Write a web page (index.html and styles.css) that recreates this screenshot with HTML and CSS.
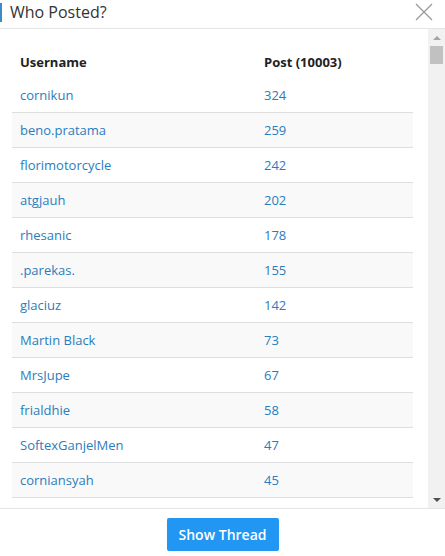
FILE: index.html
```html
<!DOCTYPE html>
<html>
<head>
<meta charset="utf-8">
<link rel="stylesheet" href="styles.css">
</head>
<body>
<div class="dialog">
  <div class="header">
    <h1 class="title">Who Posted?</h1>
    <button class="close" aria-label="Close">
      <svg width="18" height="18" viewBox="0 0 18 18"><path d="M1 1L17 17M17 1L1 17" stroke="#9a9a9a" stroke-width="1.2" fill="none"/></svg>
    </button>
  </div>
  <div class="body">
    <div class="content">
      <table class="posters">
        <thead>
          <tr><th class="c1">Username</th><th>Post (10003)</th></tr>
        </thead>
        <tbody>
          <tr><td><a href="#">cornikun</a></td><td><a href="#">324</a></td></tr>
          <tr><td><a href="#">beno.pratama</a></td><td><a href="#">259</a></td></tr>
          <tr><td><a href="#">florimotorcycle</a></td><td><a href="#">242</a></td></tr>
          <tr><td><a href="#">atgjauh</a></td><td><a href="#">202</a></td></tr>
          <tr><td><a href="#">rhesanic</a></td><td><a href="#">178</a></td></tr>
          <tr><td><a href="#">.parekas.</a></td><td><a href="#">155</a></td></tr>
          <tr><td><a href="#">glaciuz</a></td><td><a href="#">142</a></td></tr>
          <tr><td><a href="#">Martin Black</a></td><td><a href="#">73</a></td></tr>
          <tr><td><a href="#">MrsJupe</a></td><td><a href="#">67</a></td></tr>
          <tr><td><a href="#">frialdhie</a></td><td><a href="#">58</a></td></tr>
          <tr><td><a href="#">SoftexGanjelMen</a></td><td><a href="#">47</a></td></tr>
          <tr><td><a href="#">corniansyah</a></td><td><a href="#">45</a></td></tr>
        </tbody>
      </table>
    </div>
    <div class="scrollbar">
      <div class="arrow up"></div>
      <div class="track"><div class="thumb"></div></div>
      <div class="arrow down"></div>
    </div>
  </div>
  <div class="footer">
    <button class="btn">Show Thread</button>
  </div>
</div>
</body>
</html>
```
FILE: styles.css
```css
* { box-sizing: border-box; }
html, body { margin: 0; padding: 0; background: #fff; }
body { font-family: "Open Sans", "Noto Sans", sans-serif; color: #333; }
.dialog { width: 445px; height: 556px; display: flex; flex-direction: column; background: #fff; }
.header {
  height: 29px; flex: none; display: flex; align-items: center; justify-content: space-between;
  border-bottom: 1px solid #e5e5e5;
}
.title {
  margin: 0; font-size: 16px; font-weight: 400; color: #333; line-height: 20px;
  padding-left: 8px; border-left: 2px solid #3a8cc4; height: 19px; margin-top: -4px;
  display: flex; align-items: center;
}
.close { border: 0; background: none; padding: 0; margin: -5px 12px 0 0; width: 18px; height: 18px; display: block; }
.close svg { display: block; }
.body { flex: 1; display: flex; overflow: hidden; min-height: 0; }
.content { flex: 1; overflow: hidden; padding: 16px 15px 0 12px; }
.posters { width: 401px; border-collapse: separate; border-spacing: 0; font-size: 13px; }
.posters th { text-align: left; font-weight: 700; color: #222; height: 33px; padding: 0 8px; font-size: 13px; }
.posters th.c1 { width: 244px; }
.posters td { height: 35px; padding: 0 8px; border-bottom: 1px solid #dedede; }
.posters tbody tr:nth-child(even) td { background: #f9f9f9; }
.posters a { color: #2a7dbd; text-decoration: none; }
.scrollbar { width: 17px; flex: none; background: #f1f1f1; display: flex; flex-direction: column; }
.arrow { height: 17px; flex: none; display: flex; align-items: center; justify-content: center; }
.arrow::before { content: ""; width: 0; height: 0; border-left: 4px solid transparent; border-right: 4px solid transparent; }
.arrow.up::before { border-bottom: 4px solid #a3a3a3; }
.arrow.down::before { border-top: 4px solid #505050; }
.track { flex: 1; padding: 0 2px; }
.thumb { height: 18px; background: #c1c1c1; }
.footer { height: 48px; flex: none; border-top: 1px solid #e5e5e5; display: flex; justify-content: center; align-items: flex-start; padding-top: 9px; }
.btn {
  font-family: "Open Sans", "Noto Sans", sans-serif; font-size: 14px; font-weight: 600; color: #fff;
  background: #2196f3; border: 0; border-radius: 2px; width: 112px; height: 33px; padding: 0;
  line-height: 33px; display: block;
}
```
